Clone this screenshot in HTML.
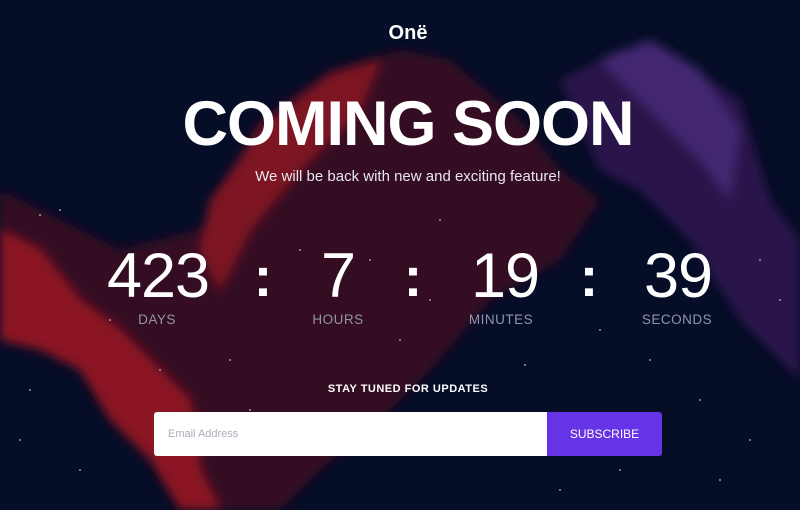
<!DOCTYPE html>
<html><head><meta charset="utf-8"><style>
*{margin:0;padding:0;box-sizing:border-box}
body{width:800px;height:510px;overflow:hidden;background:#060d27;font-family:"Liberation Sans",sans-serif;position:relative;color:#fff}
svg.bg{position:absolute;left:0;top:0}
.a{position:absolute;text-align:center;white-space:nowrap}
.num{position:absolute;font-size:63px;top:238px;line-height:76px;transform:translateX(-50%);letter-spacing:-1px}
.lbl{position:absolute;top:312px;font-size:13.5px;color:#9096a8;transform:translateX(-50%);letter-spacing:.5px}
.col{position:absolute;top:244px;font-size:56px;font-weight:bold;transform:translateX(-50%)}
</style></head><body>
<svg class="bg" width="800" height="510">
<defs><filter id="b"><feGaussianBlur stdDeviation="5"/></filter></defs>
<g filter="url(#b)" opacity=".9">
<polygon points="0,190 60,220 120,250 200,230 260,120 330,70 400,50 450,60 520,120 560,170 600,200 560,260 490,300 430,370 380,420 320,470 280,510 200,510 190,440 130,430 90,360 40,330 0,330" fill="#3a0f24"/>
<polygon points="0,230 40,250 80,300 120,330 150,360 190,400 200,470 220,510 180,510 150,460 110,420 80,370 40,350 0,340" fill="#9a1222"/>
<polygon points="210,200 260,130 330,75 380,60 360,110 300,170 250,230 220,290 200,250" fill="#8a1222"/>
<polygon points="560,80 620,50 680,60 740,100 770,200 800,240 800,380 740,320 690,240 640,190 600,170" fill="#2e1950"/>
<polygon points="600,60 650,40 700,70 740,130 730,200 700,160 660,120" fill="#4a2a78"/>
</g>
<g fill="#cfd3e0" opacity=".7">
<circle cx="40" cy="215" r="1"/><circle cx="60" cy="210" r="1"/><circle cx="110" cy="320" r="1"/><circle cx="160" cy="370" r="1"/><circle cx="230" cy="360" r="1"/><circle cx="300" cy="250" r="1"/><circle cx="370" cy="260" r="1"/><circle cx="430" cy="300" r="1"/><circle cx="470" cy="420" r="1"/><circle cx="525" cy="365" r="1"/><circle cx="650" cy="360" r="1"/><circle cx="700" cy="400" r="1"/><circle cx="750" cy="440" r="1"/><circle cx="720" cy="480" r="1"/><circle cx="20" cy="440" r="1"/><circle cx="80" cy="470" r="1"/><circle cx="560" cy="490" r="1"/><circle cx="620" cy="470" r="1"/><circle cx="780" cy="300" r="1"/><circle cx="760" cy="260" r="1"/><circle cx="440" cy="220" r="1"/><circle cx="600" cy="330" r="1"/><circle cx="400" cy="340" r="1"/><circle cx="360" cy="430" r="1"/><circle cx="250" cy="410" r="1"/><circle cx="30" cy="390" r="1"/>
</g>
</svg>
<div class="a" style="left:0;width:816px;top:22px;font-size:20px;font-weight:bold">Onë</div>
<div class="a" style="left:0;width:816px;top:86px;font-size:63px;font-weight:bold;letter-spacing:-1px;line-height:76px">COMING SOON</div>
<div class="a" style="left:0;width:816px;top:168px;font-size:15px;color:#e6e8ee">We will be back with new and exciting feature!</div>
<div class="num" style="left:158px">423</div><div class="lbl" style="left:157px">DAYS</div>
<div class="col" style="left:263px">:</div>
<div class="num" style="left:338px">7</div><div class="lbl" style="left:338px">HOURS</div>
<div class="col" style="left:413px">:</div>
<div class="num" style="left:505px">19</div><div class="lbl" style="left:501px">MINUTES</div>
<div class="col" style="left:589px">:</div>
<div class="num" style="left:678px">39</div><div class="lbl" style="left:677px">SECONDS</div>
<div class="a" style="left:0;width:816px;top:383px;font-size:11px;font-weight:bold;letter-spacing:.5px">STAY TUNED FOR UPDATES</div>
<div style="position:absolute;left:154px;top:412px;width:393px;height:44px;background:#fff;border-radius:3px 0 0 3px;color:#a9adb8;font-size:11px;padding:16px 14px">Email Address</div>
<div style="position:absolute;left:547px;top:412px;width:115px;height:44px;background:#6733e6;border-radius:0 3px 3px 0;font-size:12px;text-align:center;line-height:44px">SUBSCRIBE</div>
</body></html>
